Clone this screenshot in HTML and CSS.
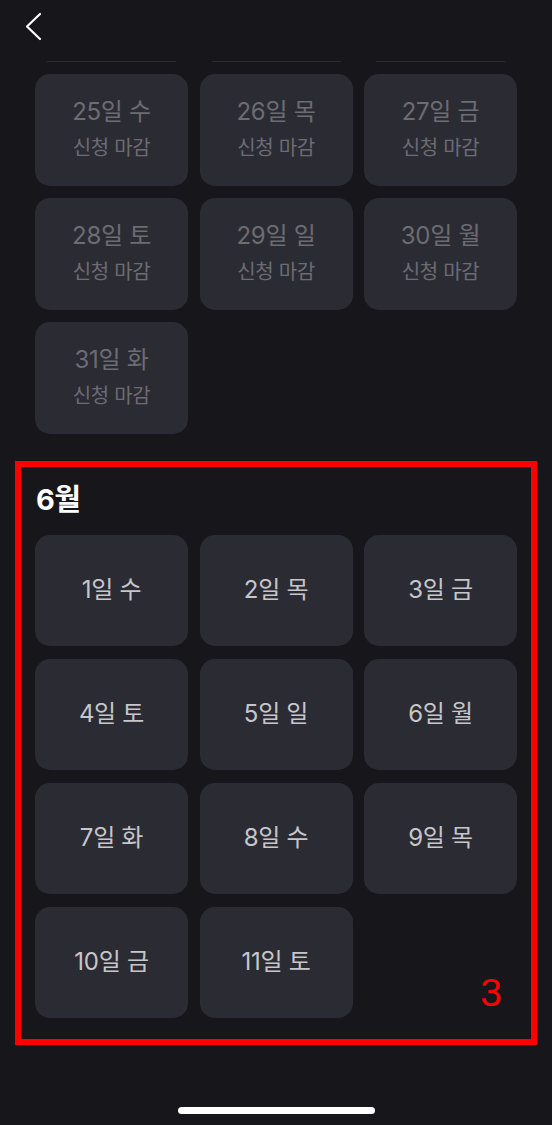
FILE: index.html
```html
<!DOCTYPE html>
<html lang="ko">
<head>
<meta charset="utf-8">
<link rel="stylesheet" href="styles.css">
</head>
<body>
<div class="screen">
  <header class="header">
    <svg class="back" width="20" height="30" viewBox="0 0 20 30"><polyline points="16,2 3,14.5 16,27" fill="none" stroke="#ffffff" stroke-width="2.2" stroke-linecap="round" stroke-linejoin="round"/></svg>
  </header>
  <div class="peek"><i></i><i></i><i></i></div>
  <div class="grid">
    <div class="card closed"><span class="day">25일 수</span><span class="note">신청 마감</span></div>
    <div class="card closed"><span class="day">26일 목</span><span class="note">신청 마감</span></div>
    <div class="card closed"><span class="day">27일 금</span><span class="note">신청 마감</span></div>
    <div class="card closed"><span class="day">28일 토</span><span class="note">신청 마감</span></div>
    <div class="card closed"><span class="day">29일 일</span><span class="note">신청 마감</span></div>
    <div class="card closed"><span class="day">30일 월</span><span class="note">신청 마감</span></div>
    <div class="card closed"><span class="day">31일 화</span><span class="note">신청 마감</span></div>
  </div>
  <section class="month">
    <h2 class="month-title">6월</h2>
    <div class="grid inner">
      <div class="card open"><span class="day">1일 수</span></div>
      <div class="card open"><span class="day">2일 목</span></div>
      <div class="card open"><span class="day">3일 금</span></div>
      <div class="card open"><span class="day">4일 토</span></div>
      <div class="card open"><span class="day">5일 일</span></div>
      <div class="card open"><span class="day">6일 월</span></div>
      <div class="card open"><span class="day">7일 화</span></div>
      <div class="card open"><span class="day">8일 수</span></div>
      <div class="card open"><span class="day">9일 목</span></div>
      <div class="card open"><span class="day">10일 금</span></div>
      <div class="card open"><span class="day">11일 토</span></div>
    </div>
    <span class="tag">3</span>
  </section>
  <div class="home"></div>
</div>
</body>
</html>
```
FILE: styles.css
```css
html, body {
  margin: 0;
  padding: 0;
  background: #16161b;
}
body {
  font-family: Inter, "Noto Sans CJK KR", sans-serif;
  color: #ffffff;
}
.screen {
  width: 552px;
  height: 1125px;
  overflow: hidden;
  display: flex;
  flex-direction: column;
}
.header {
  height: 61px;
  box-sizing: border-box;
  padding: 12px 0 0 24px;
  flex: none;
}
.back {
  display: block;
}
.peek {
  display: grid;
  grid-template-columns: repeat(3, 153px);
  column-gap: 11.5px;
  padding-left: 35px;
  margin-bottom: 12px;
}
.peek i {
  display: block;
  height: 1px;
  margin: 0 12px;
  background: #2a2a31;
}
.grid {
  display: grid;
  grid-template-columns: repeat(3, 153px);
  column-gap: 11.5px;
  row-gap: 12.5px;
  padding-left: 35px;
}
.grid.inner {
  padding-left: 0;
}
.card {
  height: 111.5px;
  border-radius: 15px;
  background: #2b2b33;
  display: flex;
  flex-direction: column;
  align-items: center;
  justify-content: center;
}
.card.closed .day {
  font-size: 24px;
  line-height: 36px;
  color: #6c6c73;
  letter-spacing: -0.3px;
}
.card.closed .note {
  font-size: 20px;
  line-height: 36px;
  color: #6c6c73;
  letter-spacing: -0.3px;
}
.card.open .day {
  font-size: 24px;
  line-height: 34px;
  color: #c6c6cb;
  letter-spacing: -0.3px;
}
.month {
  position: relative;
  margin: 27px 15px 0;
  border: 6px solid #ff0000;
  padding: 16px 14px 21px;
}
.month-title {
  margin: 0 0 18px 1px;
  font-size: 29px;
  line-height: 34px;
  font-weight: 700;
  color: #ffffff;
  letter-spacing: -0.6px;
}
.tag {
  position: absolute;
  right: 29px;
  bottom: 27px;
  font-family: "Liberation Sans", sans-serif;
  font-size: 39px;
  line-height: 1;
  color: #ff0000;
}
.home {
  width: 197px;
  height: 7px;
  border-radius: 4px;
  background: #ffffff;
  margin: 62px 0 0 178px;
  flex: none;
}
```
